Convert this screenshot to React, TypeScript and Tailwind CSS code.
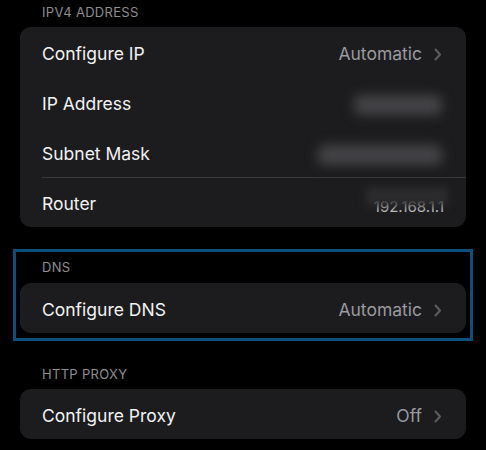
import type { ReactNode } from "react";

function Chevron() {
  return (
    <svg width="8" height="13" viewBox="0 0 8 13" className="ml-[12px] shrink-0">
      <path
        d="M1.5 1.5 L6 6.5 L1.5 11.5"
        fill="none"
        stroke="#5c5c61"
        strokeWidth="2"
        strokeLinecap="round"
        strokeLinejoin="round"
      />
    </svg>
  );
}

function Blurred({ w }: { w: number }) {
  return (
    <span
      className="block h-[20px] rounded-md bg-[#444447] blur-[6px]"
      style={{ width: w }}
    />
  );
}

function Row({
  label,
  value,
  chevron,
  divider,
}: {
  label: string;
  value?: ReactNode;
  chevron?: boolean;
  divider?: boolean;
}) {
  return (
    <div className="relative flex h-[50px] items-center pl-[22px] pr-[24px] pt-[5px]">
      {divider && (
        <div className="absolute left-[22px] right-0 top-0 h-px bg-[#3a3a3c]" />
      )}
      <span className="flex-1 text-[17.5px] text-[#f2f2f4]">{label}</span>
      <span className="flex items-center text-[17.5px] text-[#9a9a9f]">
        {value}
        {chevron && <Chevron />}
      </span>
    </div>
  );
}

function Header({ children, className }: { children: string; className: string }) {
  return (
    <div className={`pl-[22px] text-[13px] leading-[16px] tracking-[0.3px] text-[#8d8d92] ${className}`}>
      {children}
    </div>
  );
}

export default function App() {
  return (
    <div
      className="h-[450px] w-[486px] overflow-hidden bg-black"
      style={{ fontFamily: "Inter, 'Noto Sans', sans-serif" }}
    >
      <div className="px-[20px]">
        <Header className="h-[27px] pt-[4px]">IPV4 ADDRESS</Header>
        <div className="overflow-hidden rounded-[11px] bg-[#1c1c1e]">
          <Row label="Configure IP" value="Automatic" chevron />
          <Row label="IP Address" value={<Blurred w={88} />} />
          <Row label="Subnet Mask" value={<Blurred w={124} />} />
          <Row
            label="Router"
            divider
            value={
              <span className="relative mr-[-2px] block text-[15px] text-[#c8c8cc]">
                <span className="relative top-[3px]">192.168.1.1</span>
                <span className="absolute -left-[8px] -right-[4px] -top-[6px] h-[19px] bg-[#2c2c2e] blur-[4px]" />
              </span>
            }
          />
        </div>
      </div>

      <div className="mx-[13px] mt-[22px] border-[3px] border-[#0d4f7c] px-[4px] pb-[5px]">
        <Header className="h-[31px] pt-[7px]">DNS</Header>
        <div className="rounded-[11px] bg-[#1c1c1e]">
          <Row label="Configure DNS" value="Automatic" chevron />
        </div>
      </div>

      <div className="px-[20px]">
        <Header className="h-[48px] pt-[25px]">HTTP PROXY</Header>
        <div className="rounded-[11px] bg-[#1c1c1e]">
          <Row label="Configure Proxy" value="Off" chevron />
        </div>
      </div>
    </div>
  );
}
